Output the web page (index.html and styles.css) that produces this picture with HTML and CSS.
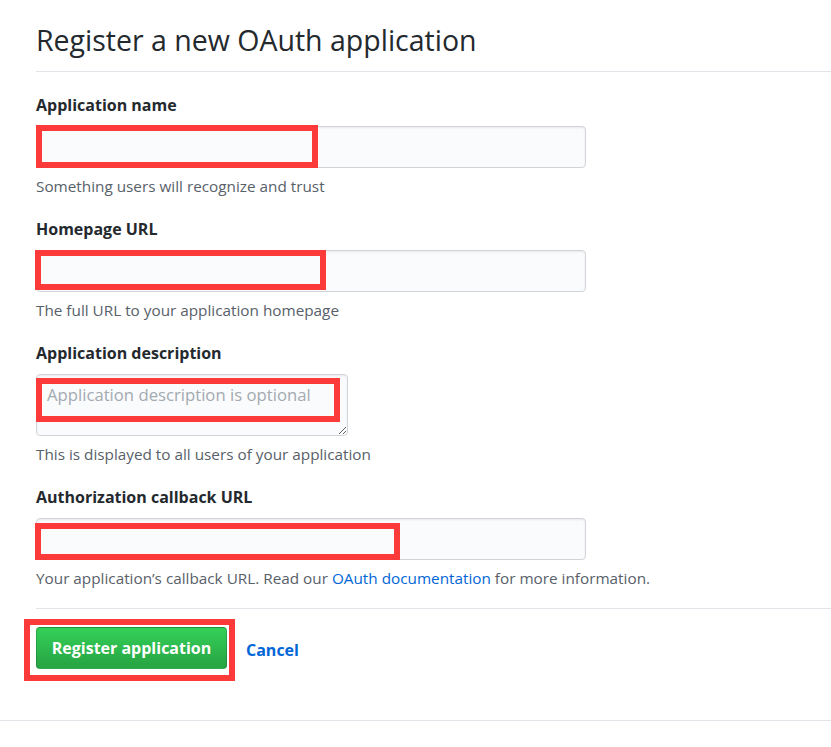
FILE: index.html
```html
<!DOCTYPE html>
<html lang="en">
<head>
<meta charset="utf-8">
<title>Register a new OAuth application</title>
<link rel="stylesheet" href="styles.css">
</head>
<body>
<div class="page">
  <div class="subhead">
    <h2 class="subhead-title">Register a new OAuth application</h2>
  </div>
  <form class="form">
    <div class="group">
      <label class="label" for="app-name">Application name</label>
      <div class="field">
        <input class="input" id="app-name" type="text">
        <span class="mark mark-1"></span>
      </div>
      <p class="note">Something users will recognize and trust</p>
    </div>
    <div class="group">
      <label class="label" for="app-url">Homepage URL</label>
      <div class="field">
        <input class="input" id="app-url" type="text">
        <span class="mark mark-2"></span>
      </div>
      <p class="note">The full URL to your application homepage</p>
    </div>
    <div class="group">
      <label class="label" for="app-desc">Application description</label>
      <div class="field">
        <textarea class="textarea" id="app-desc" placeholder="Application description is optional"></textarea>
        <span class="mark mark-3"></span>
      </div>
      <p class="note">This is displayed to all users of your application</p>
    </div>
    <div class="group">
      <label class="label" for="app-cb">Authorization callback URL</label>
      <div class="field">
        <input class="input" id="app-cb" type="text">
        <span class="mark mark-4"></span>
      </div>
      <p class="note">Your application’s callback URL. Read our <a class="link" href="#">OAuth documentation</a> for more information.</p>
    </div>
    <div class="actions">
      <div class="field">
        <button class="btn-primary" type="button">Register application</button>
        <span class="mark mark-btn"></span>
      </div>
      <a class="cancel" href="#">Cancel</a>
    </div>
  </form>
</div>
<div class="footer-line"></div>
</body>
</html>
```
FILE: styles.css
```css
html, body {
  margin: 0;
  padding: 0;
  background: #fff;
}
body {
  font-family: "Open Sans", "Noto Sans", "Liberation Sans", sans-serif;
  color: #24292e;
}
.page {
  padding-left: 36px;
}
.subhead {
  padding-top: 18px;
  padding-bottom: 9px;
  border-bottom: 1px solid #e1e4e8;
}
.subhead-title {
  margin: 0;
  font-size: 28.5px;
  font-weight: 400;
  line-height: 44px;
  color: #24292e;
}
.form {
  padding-top: 21px;
}
.group {
  margin-bottom: 21px;
}
.label {
  display: block;
  font-size: 16px;
  font-weight: 700;
  line-height: 25px;
  margin-bottom: 8px;
}
.field {
  position: relative;
  display: inline-block;
  vertical-align: top;
}
.input {
  display: block;
  box-sizing: border-box;
  width: 550px;
  height: 42px;
  margin: 0;
  padding: 6px 10px;
  font: inherit;
  font-size: 16.5px;
  background: #fafbfc;
  border: 1px solid #d1d5da;
  border-radius: 4px;
  box-shadow: inset 0 1px 2px rgba(27,31,35,0.075);
}
.textarea {
  display: block;
  box-sizing: border-box;
  width: 312px;
  height: 62px;
  margin: 0;
  padding: 9px 10px;
  font-family: inherit;
  font-size: 16.7px;
  line-height: 22px;
  color: #24292e;
  background: #fafbfc;
  border: 1px solid #d1d5da;
  border-radius: 4px;
  box-shadow: inset 0 1px 2px rgba(27,31,35,0.075);
}
.textarea::placeholder {
  color: #a3aab1;
}
.note {
  margin: 8px 0 0;
  font-size: 15.3px;
  line-height: 20px;
  color: #586069;
}
.link {
  color: #0366d6;
  text-decoration: none;
}
.mark {
  position: absolute;
  box-sizing: border-box;
  border: 6px solid #fd3a3a;
  pointer-events: none;
}
.mark-1 { left: 0; top: -1px; width: 282px; height: 43px; }
.mark-2 { left: -1px; top: 0; width: 291px; height: 40px; }
.mark-3 { left: 0; top: 4px; width: 304px; height: 44px; }
.mark-4 { left: -1px; top: 5px; width: 365px; height: 37px; }
.mark-btn { left: -12px; top: -8px; width: 211px; height: 62px; }
.actions {
  display: flex;
  align-items: center;
  border-top: 1px solid #e1e4e8;
  padding-top: 18px;
  margin-top: -1px;
}
.btn-primary {
  display: block;
  box-sizing: border-box;
  width: 191px;
  height: 42px;
  margin: 0;
  padding: 0;
  font-family: inherit;
  font-size: 16px;
  font-weight: 700;
  color: #fff;
  background-image: linear-gradient(-180deg, #34d058 0%, #28a745 90%);
  border: 1px solid rgba(27,31,35,0.2);
  border-radius: 4px;
}
.cancel {
  margin-left: 19px;
  padding-top: 3px;
  font-size: 16px;
  font-weight: 700;
  color: #0366d6;
  text-decoration: none;
}
.footer-line {
  margin-top: 51px;
  border-top: 1px solid #e1e4e8;
}
```
